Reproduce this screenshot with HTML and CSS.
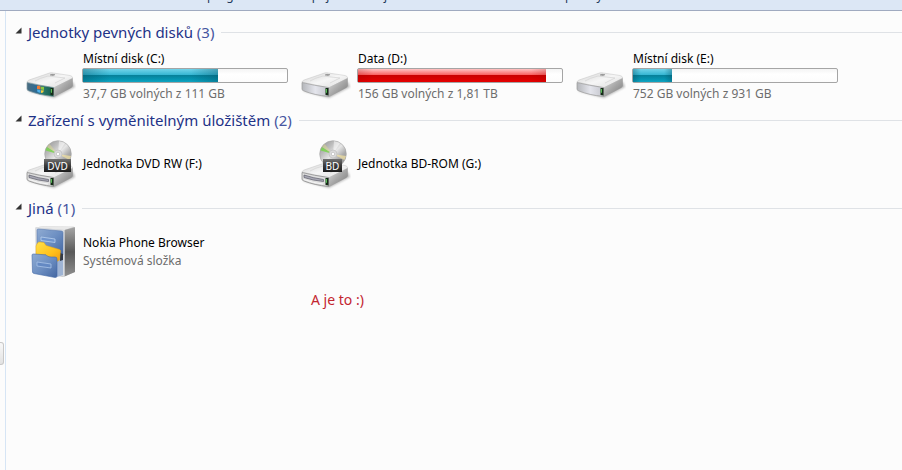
FILE: index.html
```html
<!DOCTYPE html>
<html lang="cs">
  <head>
    <meta charset="UTF-8" />
    <meta name="viewport" content="width=device-width, initial-scale=1.0" />
    <title>Počítač</title>
    <link rel="stylesheet" href="styles.css">
  </head>
  <body>
    <!-- shared gradients and shapes for the icons -->
    <svg class="defs" width="0" height="0" aria-hidden="true">
      <defs>
        <linearGradient id="top" x1="0" y1="0" x2="1" y2="1">
          <stop offset="0" stop-color="#d2d2d2" />
          <stop offset="0.5" stop-color="#f6f6f6" />
          <stop offset="1" stop-color="#dcdcdc" />
        </linearGradient>
        <linearGradient id="side" x1="0" y1="0" x2="1" y2="1">
          <stop offset="0" stop-color="#e2e2e2" />
          <stop offset="0.5" stop-color="#a8a8a8" />
          <stop offset="1" stop-color="#777" />
        </linearGradient>
        <linearGradient id="front" x1="0" y1="0" x2="1" y2="0">
          <stop offset="0" stop-color="#b4b6ba" />
          <stop offset="0.5" stop-color="#e4e5ec" />
          <stop offset="1" stop-color="#c4c5cc" />
        </linearGradient>
        <linearGradient id="front-win" x1="0" y1="0" x2="1" y2="0">
          <stop offset="0" stop-color="#4a6c80" />
          <stop offset="0.4" stop-color="#2b6c96" />
          <stop offset="0.6" stop-color="#2b7a6c" />
          <stop offset="1" stop-color="#135a4a" />
        </linearGradient>
        <linearGradient id="disc" x1="0" y1="0" x2="1" y2="1">
          <stop offset="0" stop-color="#8f8f8f" />
          <stop offset="0.3" stop-color="#bdbdbd" />
          <stop offset="0.5" stop-color="#e6e6e6" />
          <stop offset="0.7" stop-color="#aaa" />
          <stop offset="1" stop-color="#858585" />
        </linearGradient>
        <linearGradient id="badge" x1="0" y1="0" x2="0" y2="1">
          <stop offset="0" stop-color="#707070" />
          <stop offset="0.5" stop-color="#3c3c3c" />
          <stop offset="1" stop-color="#1c1c1c" />
        </linearGradient>
        <linearGradient id="cabinet-side" x1="0" y1="0" x2="0" y2="1">
          <stop offset="0" stop-color="#a5a5a5" />
          <stop offset="0.5" stop-color="#595959" />
          <stop offset="1" stop-color="#8f8f8f" />
        </linearGradient>
        <linearGradient id="drawer" x1="0" y1="0" x2="1" y2="1">
          <stop offset="0" stop-color="#8fabd2" />
          <stop offset="0.5" stop-color="#6d8fc2" />
          <stop offset="1" stop-color="#4467a2" />
        </linearGradient>
        <linearGradient id="folder" x1="0" y1="0" x2="1" y2="1">
          <stop offset="0" stop-color="#ffe14a" />
          <stop offset="0.6" stop-color="#ffc01a" />
          <stop offset="1" stop-color="#f09a10" />
        </linearGradient>
        <filter id="soft" x="-20%" y="-20%" width="140%" height="160%">
          <feGaussianBlur stdDeviation="1" />
        </filter>

        <g id="drive-case">
          <path d="M2 40L28 47L49 36L47 31L20 34Z" fill="#777" opacity="0.5" filter="url(#soft)" />
          <path d="M1 31Q1 30 3 29L22 22.500Q24 21.500 26 21.800L44 24.500Q46.500 25 46.800 27L28 37Z" fill="url(#top)" stroke="#c4c4c4" stroke-width="0.500" />
          <path d="M27.500 36.500L46.800 27V35Q46.500 36 45 37L29 45.500L27 46Z" fill="url(#side)" />
          <path d="M9 30Q14 27 22 25Q30 26 39 27L29 32" fill="none" stroke="#d2d2d2" stroke-width="0.700" />
          <path d="M24 24L26 23.300L29 23.700L27 24.500Z" fill="#888" stroke="#888" stroke-width="0.500" />
        </g>
        <g id="drive-light">
          <path d="M24.500 37L27.500 37V44.500L24.500 44Z" fill="#152a17" />
          <path d="M24.800 38L26 38V42L24.800 41.500Z" fill="#58bd57" />
        </g>
        <g id="hard-drive">
          <use href="#drive-case" />
          <path d="M1 31.500Q13 34.500 27.500 36.500V45.500Q13 44 3 40Q1 39.500 1 38Z" fill="url(#front)" stroke="#999" stroke-width="0.700" />
          <use href="#drive-light" />
        </g>
        <g id="disc-drive">
          <g transform="translate(0 2)">
            <use href="#drive-case" />
            <path d="M1 31.500Q13 34.500 27.500 36.500V45.500Q13 44 3 40Q1 39.500 1 38Z" fill="#dedede" stroke="#8c8c8c" stroke-width="0.800" />
            <path d="M3 34Q12 37 22.500 38.500V40.500Q12 39.500 3 36.500Z" fill="#a8a8b4" stroke="#5c5c68" stroke-width="0.700" />
            <path d="M3 38.500Q12 42 22 43" stroke="#f6f6f6" stroke-width="1" fill="none" />
            <use href="#drive-light" />
          </g>
          <circle cx="32" cy="15" r="13.300" fill="url(#disc)" stroke="#a2a2a2" stroke-width="0.600" />
          <path d="M32 15L19.500 11.500L21 8Z" fill="#79d34d" opacity="0.850" />
          <path d="M32 15L21 8L23.500 5Z" fill="#e9e58a" opacity="0.400" />
          <path d="M32 15L33 2L39 4Z" fill="#fff" opacity="0.500" />
          <path d="M32 15L45 17L43.500 21Z" fill="#f3e3a1" opacity="0.700" />
          <circle cx="32" cy="15" r="4" fill="#dadada" stroke="#b4b4b4" stroke-width="0.500" />
          <circle cx="32" cy="15" r="1.700" fill="#fff" stroke="#aaa" stroke-width="0.500" />
        </g>
      </defs>
    </svg>

    <div class="toolbar">
      <button type="button">Odinstalovat nebo změnit program</button>
      <button type="button">Připojit síťovou jednotku</button>
      <button type="button">Otevřít ovládací panely</button>
    </div>

    <div class="window">
      <div class="splitter">
        <button type="button" class="splitter-handle" aria-label="Navigační podokno"></button>
      </div>

      <main class="content">
        <section class="group">
          <div class="group-header">
            <button type="button" class="toggle" aria-label="Sbalit">
              <svg viewBox="0 0 7 7"><path d="M6.500 0.500V6.500H0.500Z" /></svg>
            </button>
            <h2>Jednotky pevných disků <span>(3)</span></h2>
          </div>
          <div class="items">
            <div class="item">
              <svg class="icon" viewBox="0 -1 50 52" aria-hidden="true">
                <use href="#drive-case" />
                <path d="M1 31.500Q13 34.500 27.500 36.500V45.500Q13 44 3 40Q1 39.500 1 38Z" fill="url(#front-win)" stroke="#8399a0" stroke-width="0.700" />
                <path d="M11 35Q13 34 14.500 35.500V38.500L11 38Z" fill="#ee7b35" />
                <path d="M15 35.700L18 36V39L15 38.600Z" fill="#8cc63f" />
                <path d="M11 38.500L14.500 39V42L11.500 41Z" fill="#4fb0ea" />
                <path d="M15 39.200L18 39.500Q17.500 42 15 42Z" fill="#fbd03b" />
                <use href="#drive-light" />
              </svg>
              <div class="info">
                <div class="name">Místní disk (C:)</div>
                <div class="bar"><div class="fill" style="width: 66%"></div></div>
                <div class="detail">37,7 GB volných z 111 GB</div>
              </div>
            </div>
            <div class="item">
              <svg class="icon" viewBox="0 -1 50 52" aria-hidden="true"><use href="#hard-drive" /></svg>
              <div class="info">
                <div class="name">Data (D:)</div>
                <div class="bar"><div class="fill full" style="width: 92%"></div></div>
                <div class="detail">156 GB volných z 1,81 TB</div>
              </div>
            </div>
            <div class="item">
              <svg class="icon" viewBox="0 -1 50 52" aria-hidden="true"><use href="#hard-drive" /></svg>
              <div class="info">
                <div class="name">Místní disk (E:)</div>
                <div class="bar"><div class="fill" style="width: 19%"></div></div>
                <div class="detail">752 GB volných z 931 GB</div>
              </div>
            </div>
          </div>
        </section>

        <section class="group">
          <div class="group-header">
            <button type="button" class="toggle" aria-label="Sbalit">
              <svg viewBox="0 0 7 7"><path d="M6.500 0.500V6.500H0.500Z" /></svg>
            </button>
            <h2>Zařízení s vyměnitelným úložištěm <span>(2)</span></h2>
          </div>
          <div class="items">
            <div class="item">
              <svg class="icon" viewBox="0 -1 50 52" aria-hidden="true">
                <use href="#disc-drive" />
                <rect x="18" y="20" width="27" height="13" fill="url(#badge)" />
                <text x="31.500" y="30.500" class="badge-text">DVD</text>
              </svg>
              <div class="info">
                <div class="name">Jednotka DVD RW (F:)</div>
              </div>
            </div>
            <div class="item">
              <svg class="icon" viewBox="0 -1 50 52" aria-hidden="true">
                <use href="#disc-drive" />
                <rect x="22" y="20" width="19" height="13" fill="url(#badge)" />
                <text x="31.500" y="30.500" class="badge-text">BD</text>
              </svg>
              <div class="info">
                <div class="name">Jednotka BD-ROM (G:)</div>
              </div>
            </div>
          </div>
        </section>

        <section class="group">
          <div class="group-header">
            <button type="button" class="toggle" aria-label="Sbalit">
              <svg viewBox="0 0 7 7"><path d="M6.500 0.500V6.500H0.500Z" /></svg>
            </button>
            <h2>Jiná <span>(1)</span></h2>
          </div>
          <div class="items">
            <div class="item">
              <svg class="icon" viewBox="0 0 50 52" aria-hidden="true">
                <path d="M9.500 1.500L17 0.300L48 0.800Q49 1 49 2V46L37 51L10 46Z" fill="#c9c9c9" />
                <path d="M9.500 1.500L17 0.300L48 0.800L38.500 4Z" fill="#e9e9e9" />
                <path d="M38.500 4L49 1.200V46L38.500 50.500Z" fill="url(#cabinet-side)" />
                <path d="M9.500 1.500L38.500 4V50.500L10 46Z" fill="#d8dce2" />
                <path d="M11 4Q11 3 12.500 3L35.500 5Q37 5.200 37 6.500V29L11 25Z" fill="url(#drawer)" stroke="#5273a8" stroke-width="0.500" />
                <path d="M15 11L29 13V16.500L15 14.500Z" fill="#6f94cc" stroke="#b9d0ee" stroke-width="0.800" />
                <path d="M31 30L37 28V49L31 51Z" fill="#9fb4d4" />
                <path d="M34 27L37 28V34L34 35Z" fill="#333a48" />
                <path d="M10 20L11.500 17Q12 16 14 16L18 16.500L20 19.500L33.500 23.500Q34.500 24 34.500 25L33.500 34L30 36L10 30Z" fill="url(#folder)" stroke="#e8a615" stroke-width="0.500" />
                <path d="M6 29Q6 28 7.500 28L20 28.800Q21.500 31.500 29 31Q31 31 31 33V50Q31 51.500 29 51.500L8 47.500Q6.500 47 6.500 46Z" fill="url(#drawer)" stroke="#456aa8" stroke-width="0.600" />
                <path d="M11 36L25 38V42L11 40Z" fill="#6489c3" stroke="#a9c4e8" stroke-width="0.800" />
              </svg>
              <div class="info">
                <div class="name">Nokia Phone Browser</div>
                <div class="detail">Systémová složka</div>
              </div>
            </div>
          </div>
        </section>

        <p class="note">A je to :)</p>
      </main>
    </div>
  </body>
</html>
```
FILE: styles.css
```css
* {
  box-sizing: border-box;
}

body {
  display: flex;
  flex-direction: column;
  min-height: 100vh;
  margin: 0;
  background-color: #fcfcfc;
  color: #000;
  font-family: "Noto Sans", "Open Sans", sans-serif;
  font-size: 12px;
  line-height: 18px;
}

button {
  padding: 0;
  border: none;
  background: none;
  color: inherit;
  font: inherit;
}

.defs {
  position: absolute;
}

/* only the bottom edge of the command bar is in view */
.toolbar {
  display: flex;
  align-items: flex-end;
  gap: 40px;
  height: 11px;
  padding: 0 0 5px 59px;
  overflow: hidden;
  background-color: #dce7f5;
  border-bottom: 1px solid #a0aac0;
  color: #1e395b;
  white-space: nowrap;
}

.window {
  display: flex;
  flex: 1;
}

.splitter {
  width: 6px;
  padding-top: 331px;
  border-right: 1px solid #d6e5f5;
}

.splitter-handle {
  display: block;
  width: 4px;
  height: 23px;
  background: linear-gradient(#f8f8f8, #e2e2e2);
  border: 1px solid #c8c8c8;
  border-left: none;
  border-radius: 0 3px 3px 0;
}

.content {
  flex: 1;
  padding-top: 11px;
}

.group-header {
  display: flex;
  align-items: center;
  height: 20px;
  padding-left: 9px;
}

.group-header::after {
  content: "";
  flex: 1;
  height: 1px;
  margin-left: 7px;
  background-color: #dfe2e6;
}

.toggle {
  width: 7px;
  height: 11px;
  margin-right: 6px;
  padding-bottom: 4px;
}

.toggle svg {
  display: block;
  width: 7px;
  height: 7px;
  fill: #333;
}

h2 {
  margin: 0;
  color: #1e3287;
  font-size: 15px;
  font-weight: normal;
  line-height: 20px;
}

h2 span {
  color: #4655a0;
}

.items {
  display: grid;
  grid-template-columns: repeat(auto-fill, 275px);
  padding-left: 20px;
}

.item {
  display: flex;
  align-items: center;
  height: 68px;
}

.icon {
  width: 50px;
  height: 52px;
  margin-right: 6px;
}

.info {
  width: 206px;
}

.name,
.detail {
  padding-left: 1px;
}

.detail {
  color: #6d6d6d;
}

.bar {
  height: 15px;
  margin-bottom: 2px;
  background: linear-gradient(#f4f4f4, #fff 40%, #fcfcfc);
  border: 1px solid #a5a5a5;
  border-radius: 2px;
}

.fill {
  height: 100%;
  background:
    linear-gradient(90deg, rgba(0, 70, 90, 0.35), transparent 20%, transparent 80%, rgba(0, 70, 90, 0.35)),
    linear-gradient(#72d4ea, #35b6d3 45%, #067f98 46%, #0595b2 80%, #10a5c2);
}

.fill.full {
  background:
    linear-gradient(90deg, rgba(150, 0, 0, 0.2), transparent 8%, transparent 92%, rgba(150, 0, 0, 0.2)),
    linear-gradient(#ffc4c4, #f96060 45%, #c80000 46%, #da0000 80%, #e60000);
}

.badge-text {
  fill: #fff;
  font-size: 10px;
  text-anchor: middle;
}

.note {
  margin: 0;
  padding-left: 305px;
  color: #c32530;
  font-size: 14px;
  line-height: 28px;
}
```
